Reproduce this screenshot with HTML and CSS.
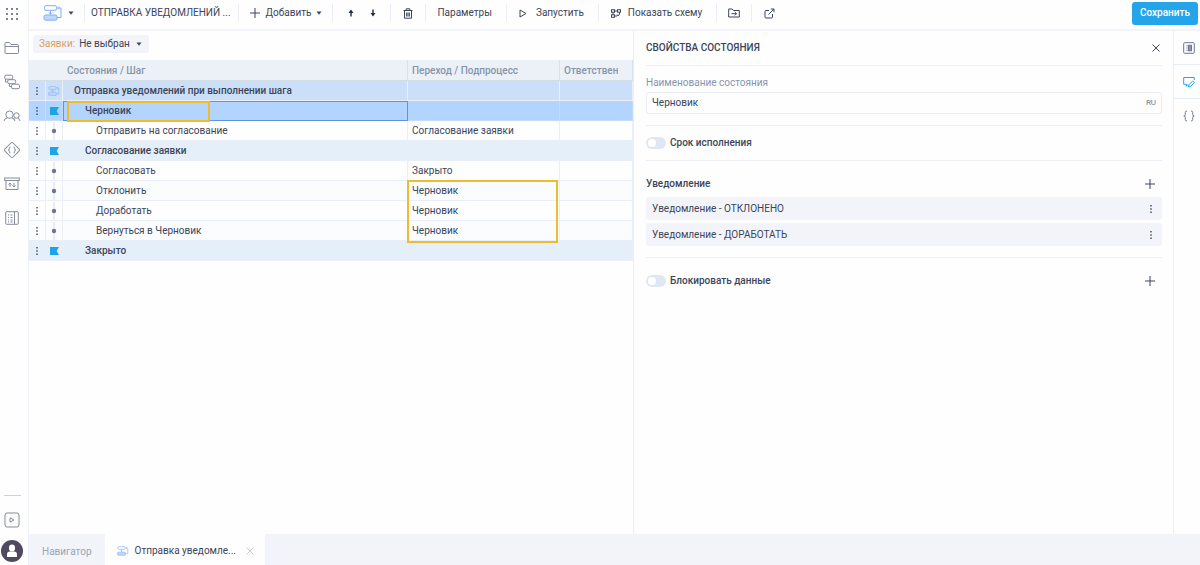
FILE: index.html
```html
<!DOCTYPE html>
<html lang="ru">
<head>
    <meta charset="UTF-8">
    <meta name="viewport" content="width=device-width, initial-scale=1.0">
    <title>Отправка уведомлений при выполнении шага</title>
    <link rel="stylesheet" href="styles.css">
</head>
<body>
    <!-- Набор иконок -->
    <svg class="sprite" aria-hidden="true">
        <symbol id="i-plus" viewBox="0 0 12 12"><path d="M6 1v10M1 6h10"/></symbol>
        <symbol id="i-close" viewBox="0 0 10 10"><path d="M1.5 1.5l7 7M8.500 1.500l-7 7"/></symbol>
        <symbol id="i-caret" viewBox="0 0 6 4"><path d="M.5.5h5L3 3.700z" fill="currentColor" stroke="none"/></symbol>
        <symbol id="i-dots" viewBox="0 0 4 10"><path d="M1.300 1h1.400v1.400H1.300zM1.300 4.300h1.400v1.400H1.300zM1.300 7.600h1.400V9H1.300z" fill="currentColor" stroke="none"/></symbol>
        <symbol id="i-process" viewBox="0 0 20 16"><rect x="1.500" y=".7" width="12" height="4.600" rx="1.500"/><path d="M14.500 3H18v9.500h-4M7.500 5.500V9M5.800 7.500L7.500 9.200l1.700-1.700M16 1.500L14.500 3 16 4.500"/><rect x="1" y="10" width="13" height="5.200" rx="1.500" fill="#bdd7fd"/></symbol>
        <symbol id="i-flag" viewBox="0 0 9 8"><path d="M0 0h9L6.700 4 9 8H0z" fill="#1fa3e8" stroke="none"/></symbol>
        <symbol id="i-step" viewBox="0 0 8 18"><path d="M4 0v18" stroke="#d5dceb"/><circle cx="4" cy="9" r="2.200" fill="#6d7890" stroke="none"/></symbol>
    </svg>

    <div class="app">
        <!-- Левое меню -->
        <nav class="sidebar" aria-label="Главное меню">
            <button class="nav-button nav-apps" aria-label="Меню"><svg width="12" height="12" viewBox="0 0 12 12"><path d="M0 0h2v2H0zM5 0h2v2H5zM10 0h2v2h-2zM0 5h2v2H0zM5 5h2v2H5zM10 5h2v2h-2zM0 10h2v2H0zM5 10h2v2H5zM10 10h2v2h-2z" fill="#7b8291" stroke="none"/></svg></button>
            <button class="nav-button" aria-label="Файлы"><svg width="16" height="14" viewBox="0 0 16 14"><path d="M1 11.500V2.500Q1 1.500 2 1.500h3.500L7 3.500h6.500q1 0 1 1v7q0 1-1 1H2q-1 0-1-1zM1 5.500h13.500"/></svg></button>
            <button class="nav-button" aria-label="Процессы"><svg width="16" height="16" viewBox="0 0 16 16"><rect x=".7" y="1.200" width="8" height="4" rx="1.500"/><rect x="3.700" y="5.700" width="8" height="4" rx="1.500" fill="#fff"/><rect x="7.500" y="10.200" width="8" height="4.500" rx="1.500" fill="#fff"/><path d="M1.500 5v3h2M5.500 10v2.500h2"/></svg></button>
            <button class="nav-button" aria-label="Пользователи"><svg width="18" height="12" viewBox="0 0 18 12"><circle cx="6.500" cy="4.700" r="3.700"/><path d="M1 11q.6-2.800 3.200-3M12 11q-.6-2.800-3.200-3"/><circle cx="13.500" cy="5.500" r="2.700"/><path d="M14.800 8.300q1.900.5 2.200 2.700M12.200 8.200q-1 .5-1 1.300"/></svg></button>
            <button class="nav-button" aria-label="Скрипты"><svg width="18" height="18" viewBox="0 0 18 18"><rect x="3.300" y="3.300" width="11.400" height="11.400" rx="1.500" transform="rotate(45 9 9)"/><path d="M7.500 6q-1.400 0-1.200 1.500T5.300 9q1.200 0 1 1.500T7.500 12M10.500 6q1.400 0 1.200 1.500T12.700 9q-1.200 0-1 1.500T10.500 12"/></svg></button>
            <button class="nav-button" aria-label="Обмен"><svg width="16" height="14" viewBox="0 0 16 14"><rect x=".7" y="1" width="14.600" height="2.500"/><path d="M2 3.500v9h12v-9M6 10V6M4.500 7.500L6 6l1.500 1.500M10 6v4M8.500 8.500L10 10l1.500-1.500"/></svg></button>
            <button class="nav-button" aria-label="Журнал"><svg width="14" height="14" viewBox="0 0 14 14"><rect x=".7" y=".7" width="12.600" height="12.600" rx="1"/><path d="M9.500 1v12M3 4h1M5.500 4h2M3 6.500h1M5.500 6.500h2M3 9h1M5.500 9h2M3 11h1M5.500 11h2"/></svg></button>
            <div class="sidebar-bottom">
                <button class="nav-button" aria-label="Видео"><svg width="16" height="16" viewBox="0 0 16 16"><rect x="1" y="1" width="14" height="14" rx="2"/><path d="M6 5.800l4 2.200-4 2.200z"/></svg></button>
                <button class="nav-button" aria-label="Профиль"><svg width="22" height="22" viewBox="0 0 22 22"><circle cx="11" cy="11" r="11" fill="#514960" stroke="none"/><rect x="8" y="4.500" width="6" height="7" rx="3" fill="#fff" stroke="none"/><path d="M6 17v-2.500q0-3 3-3h4q3 0 3 3V17z" fill="#fff" stroke="none"/></svg></button>
            </div>
        </nav>

        <div class="workspace">
            <!-- Панель инструментов -->
            <header class="toolbar">
                <div class="tool-group group-logo">
                    <button class="tool" aria-label="Тип объекта"><svg class="blue" width="20" height="16"><use href="#i-process"/></svg><svg width="6" height="4"><use href="#i-caret"/></svg></button>
                </div>
                <div class="tool-group group-title">ОТПРАВКА УВЕДОМЛЕНИЙ ...</div>
                <div class="tool-group group-add">
                    <button class="tool"><svg width="12" height="12"><use href="#i-plus"/></svg><span>Добавить</span><svg width="6" height="4"><use href="#i-caret"/></svg></button>
                </div>
                <div class="tool-group group-arrows">
                    <button class="tool" aria-label="Вверх"><svg width="8" height="8" viewBox="0 0 8 8"><path d="M4 .5l2.500 3.500H4.700v3.500H3.300V4H1.500z" fill="#1f2c40" stroke="none"/></svg></button>
                    <button class="tool" aria-label="Вниз"><svg width="8" height="8" viewBox="0 0 8 8"><path d="M4 7.500L1.500 4h1.800V.5h1.400V4h1.800z" fill="#1f2c40" stroke="none"/></svg></button>
                </div>
                <div class="tool-group group-icon">
                    <button class="tool" aria-label="Удалить"><svg width="10" height="11" viewBox="0 0 10 11"><path d="M.5 2.500h9M3.200 2.500V.8h3.600v1.700M1.500 2.500v7.700h7V2.500M3.700 4.500v4M5 4.500v4M6.300 4.500v4"/></svg></button>
                </div>
                <div class="tool-group group-params"><button class="tool">Параметры</button></div>
                <div class="tool-group group-run">
                    <button class="tool"><svg width="8" height="9" viewBox="0 0 8 9"><path d="M1 1l6 3.500L1 8z"/></svg><span>Запустить</span></button>
                </div>
                <div class="tool-group group-schema">
                    <button class="tool"><svg width="10" height="9" viewBox="0 0 10 9"><rect x=".5" y=".7" width="3" height="2.500"/><rect x="6.500" y=".7" width="3" height="2.500"/><rect x=".5" y="5.800" width="3" height="2.500"/><path d="M3.500 2h3M2 3.200v2.600M3.500 7H6M8.500 3.200V5L7 7l-1-1.500"/></svg><span>Показать схему</span></button>
                </div>
                <div class="tool-group group-icon">
                    <button class="tool" aria-label="Переместить"><svg width="12" height="10" viewBox="0 0 12 10"><path d="M.7 9V1h3.500l1.300 1.500h5.800V9zM3.500 5.700h5M6.800 4l1.700 1.700-1.700 1.700"/></svg></button>
                </div>
                <div class="tool-group group-icon">
                    <button class="tool" aria-label="Открыть отдельно"><svg width="11" height="11" viewBox="0 0 11 11"><path d="M5 2.500H2q-1 0-1 1V9q0 1 1 1h5.500q1 0 1-1V6M4.500 6.500L10 1M6.800 1H10v3.200"/></svg></button>
                </div>
                <button class="save-button">Сохранить</button>
            </header>

            <div class="content">
                <!-- Таблица состояний -->
                <main class="states">
                    <div class="filter">
                        <label for="request">Заявки:</label>
                        <select id="request"><option>Не выбран</option></select>
                        <svg width="6" height="4"><use href="#i-caret"/></svg>
                    </div>
                    <table class="states-table">
                        <colgroup><col class="col-menu"><col class="col-type"><col><col class="col-target"><col class="col-owner"></colgroup>
                        <thead>
                            <tr><th colspan="3" class="th-name">Состояния / Шаг</th><th>Переход / Подпроцесс</th><th><div class="clip">Ответственный</div></th></tr>
                        </thead>
                        <tbody>
                            <tr class="row-root">
                                <td><svg width="4" height="10"><use href="#i-dots"/></svg></td>
                                <td><svg class="blue" width="12" height="10"><use href="#i-process"/></svg></td>
                                <td class="level-0">Отправка уведомлений при выполнении шага</td><td></td><td></td>
                            </tr>
                            <tr class="row-selected">
                                <td><svg width="4" height="10"><use href="#i-dots"/></svg></td>
                                <td><svg width="9" height="8"><use href="#i-flag"/></svg></td>
                                <td class="level-1 cell-focus">Черновик<span class="mark mark-state"></span></td><td></td><td></td>
                            </tr>
                            <tr>
                                <td><svg width="4" height="10"><use href="#i-dots"/></svg></td>
                                <td><svg width="8" height="18"><use href="#i-step"/></svg></td>
                                <td class="level-2">Отправить на согласование</td><td>Согласование заявки</td><td></td>
                            </tr>
                            <tr class="row-state">
                                <td><svg width="4" height="10"><use href="#i-dots"/></svg></td>
                                <td><svg width="9" height="8"><use href="#i-flag"/></svg></td>
                                <td class="level-1">Согласование заявки</td><td></td><td></td>
                            </tr>
                            <tr>
                                <td><svg width="4" height="10"><use href="#i-dots"/></svg></td>
                                <td><svg width="8" height="18"><use href="#i-step"/></svg></td>
                                <td class="level-2">Согласовать</td><td>Закрыто</td><td></td>
                            </tr>
                            <tr class="row-alt">
                                <td><svg width="4" height="10"><use href="#i-dots"/></svg></td>
                                <td><svg width="8" height="18"><use href="#i-step"/></svg></td>
                                <td class="level-2">Отклонить</td><td class="cell-mark">Черновик<span class="mark mark-target"></span></td><td></td>
                            </tr>
                            <tr>
                                <td><svg width="4" height="10"><use href="#i-dots"/></svg></td>
                                <td><svg width="8" height="18"><use href="#i-step"/></svg></td>
                                <td class="level-2">Доработать</td><td>Черновик</td><td></td>
                            </tr>
                            <tr class="row-alt">
                                <td><svg width="4" height="10"><use href="#i-dots"/></svg></td>
                                <td><svg width="8" height="18"><use href="#i-step"/></svg></td>
                                <td class="level-2">Вернуться в Черновик</td><td>Черновик</td><td></td>
                            </tr>
                            <tr class="row-state">
                                <td><svg width="4" height="10"><use href="#i-dots"/></svg></td>
                                <td><svg width="9" height="8"><use href="#i-flag"/></svg></td>
                                <td class="level-1">Закрыто</td><td></td><td></td>
                            </tr>
                        </tbody>
                    </table>
                </main>

                <!-- Свойства состояния -->
                <aside class="properties">
                    <div class="section section-title">
                        <h2>СВОЙСТВА СОСТОЯНИЯ</h2>
                        <button class="icon-button" aria-label="Закрыть"><svg width="10" height="10"><use href="#i-close"/></svg></button>
                    </div>
                    <div class="section section-name">
                        <label for="state-name">Наименование состояния</label>
                        <div class="field"><input type="text" id="state-name" value="Черновик"><span class="lang">RU</span></div>
                    </div>
                    <div class="section section-term">
                        <label class="switch"><input type="checkbox"><span>Срок исполнения</span></label>
                    </div>
                    <div class="section section-notice">
                        <div class="section-head">
                            <h3>Уведомление</h3>
                            <button class="icon-button" aria-label="Добавить уведомление"><svg width="12" height="12"><use href="#i-plus"/></svg></button>
                        </div>
                        <div class="notice">Уведомление - ОТКЛОНЕНО<button class="icon-button" aria-label="Действия"><svg width="4" height="10"><use href="#i-dots"/></svg></button></div>
                        <div class="notice">Уведомление - ДОРАБОТАТЬ<button class="icon-button" aria-label="Действия"><svg width="4" height="10"><use href="#i-dots"/></svg></button></div>
                    </div>
                    <div class="section section-lock">
                        <label class="switch"><input type="checkbox"><span>Блокировать данные</span></label>
                        <button class="icon-button" aria-label="Добавить блокировку"><svg width="12" height="12"><use href="#i-plus"/></svg></button>
                    </div>
                </aside>

                <!-- Правая панель -->
                <nav class="rail" aria-label="Панели">
                    <button aria-label="Форма"><svg width="12" height="12" viewBox="0 0 12 12"><rect x=".7" y=".7" width="10.600" height="10.600" rx="1"/><path d="M3.500 3.500h1M3.500 5.200h1M3.500 6.900h1M3.500 8.600h1" /><rect x="5.500" y="3.300" width="3" height="5.500" fill="#8d95a5"/></svg></button>
                    <button class="active" aria-label="Свойства"><svg width="12" height="12" viewBox="0 0 12 12"><path d="M11.300 4V1.500H.7v6.800h2.800v2L5 8.300M5.500 11l.4-2.200L9.800 5l1.600 1.600-3.900 3.900z"/></svg></button>
                    <button aria-label="Переменные"><svg width="12" height="12" viewBox="0 0 12 12"><path d="M4 1Q2.300 1 2.300 2.500v2Q2.300 6 .8 6q1.500 0 1.500 1.500v2Q2.300 11 4 11M8 1q1.700 0 1.700 1.500v2Q9.700 6 11.200 6 9.700 6 9.700 7.500v2Q9.700 11 8 11"/></svg></button>
                </nav>
            </div>

            <!-- Вкладки -->
            <footer class="tabs">
                <button class="tab">Навигатор</button>
                <div class="tab tab-active">
                    <svg class="blue" width="12" height="10"><use href="#i-process"/></svg>
                    <a href="#">Отправка уведомле...</a>
                    <button class="icon-button" aria-label="Закрыть вкладку"><svg width="10" height="10"><use href="#i-close"/></svg></button>
                </div>
            </footer>
        </div>
    </div>
</body>
</html>
```
FILE: styles.css
```css
* {
    box-sizing: border-box;
}
body {
    margin: 0;
    font-family: Roboto, Arial, sans-serif;
    font-size: 10px;
    line-height: 14px;
    color: #3c4558;
    background-color: #fefefe;
}
button, input, select {
    font: inherit;
    color: inherit;
    padding: 0;
    border: none;
    background: none;
}
button {
    cursor: pointer;
}
svg {
    display: block;
    flex: none;
    fill: none;
    stroke: currentColor;
}
h2, h3 {
    margin: 0;
    font-size: 10px;
    font-weight: 500;
}
.sprite {
    position: absolute;
    width: 0;
    height: 0;
}
.blue {
    color: #7fb0f5;
}
.app {
    display: flex;
    min-height: 100vh;
}

/* Левое меню */
.sidebar {
    width: 29px;
    padding-right: 4px;
    display: flex;
    flex-direction: column;
    border-right: 1px solid #eef0f7;
    color: #858b99;
}
.nav-button {
    height: 34px;
    display: flex;
    align-items: center;
    justify-content: center;
}
.nav-apps {
    height: 27px;
    margin-bottom: 4px;
}
.sidebar-bottom {
    margin-top: auto;
    display: flex;
    flex-direction: column;
}
.sidebar-bottom::before {
    content: "";
    height: 1px;
    margin: 0 3px 6px 4px;
    background-color: #c9d3e0;
}
.sidebar-bottom .nav-button {
    height: 35px;
}
.sidebar-bottom .nav-button:last-child {
    height: 28px;
}

.workspace {
    flex: 1;
    min-width: 0;
    display: flex;
    flex-direction: column;
}

/* Панель инструментов */
.toolbar {
    height: 31px;
    padding: 0 2px 3px 0;
    display: flex;
    align-items: center;
    border-bottom: 2px solid #f3f4fa;
}
.tool-group {
    height: 18px;
    display: flex;
    align-items: center;
    justify-content: center;
    border-right: 1px solid #eceef7;
    white-space: nowrap;
}
.tool-group:nth-last-child(2) {
    border-right: none;
}
.tool {
    display: flex;
    align-items: center;
    gap: 5px;
    color: #3c4558;
}
.group-logo {
    padding: 0 10px 0 14px;
}
.group-title {
    padding: 0 7px 0 6px;
}
.group-add {
    padding: 0 10px;
}
.group-arrows {
    width: 58px;
    gap: 14px;
}
.group-icon {
    width: 35px;
}
.group-params {
    padding: 0 14px 0 11px;
}
.group-run {
    padding: 0 14px 0 12px;
}
.group-run .tool {
    gap: 9px;
}
.group-schema {
    padding: 0 14px 0 12px;
}
.group-schema .tool {
    gap: 7px;
}
.save-button {
    height: 23px;
    margin-left: auto;
    padding: 0 8px;
    border-radius: 3px;
    background-color: #24a5ea;
    color: white;
    font-weight: 500;
}

.content {
    flex: 1;
    display: grid;
    grid-template-columns: 605fr 539fr 27px;
}

/* Таблица состояний */
.states {
    min-width: 0;
    border-right: 1px solid #edeef5;
}
.filter {
    width: max-content;
    height: 18px;
    margin: 4px 0 7px 4px;
    padding: 0 7px 0 6px;
    display: flex;
    align-items: center;
    gap: 4px;
    border-radius: 3px;
    background-color: #f3f4fa;
}
.filter label {
    color: #d9a066;
}
.filter select {
    appearance: none;
    margin-right: 2px;
}
.states-table {
    width: 100%;
    table-layout: fixed;
    border-collapse: separate;
    border-spacing: 0;
}
.col-menu {
    width: 17px;
}
.col-type {
    width: 17px;
}
.col-target {
    width: 152px;
}
.col-owner {
    width: 73px;
}
.states-table th {
    height: 21px;
    padding: 1px 14px 0 4px;
    text-align: left;
    font-weight: 500;
    color: #8795ab;
    background-color: #ecf0f7;
    border-right: 1px solid #d9e0ea;
    border-bottom: 1px solid #d3dde6;
    white-space: nowrap;
}
.states-table .th-name {
    padding-left: 38px;
}
.clip {
    overflow: hidden;
}
.states-table td {
    height: 20px;
    padding: 0 0 0 4px;
    border-right: 1px solid #e9eef7;
    border-bottom: 1px solid #e9eef7;
    white-space: nowrap;
}
.states-table td svg {
    margin: 0 auto;
}
.states-table td:nth-child(-n+2) {
    padding: 0;
}
.states-table .level-0 {
    padding-left: 11px;
}
.states-table .level-1 {
    padding-left: 22px;
}
.states-table .level-2 {
    padding-left: 33px;
}
.row-root, .row-selected, .row-state {
    font-weight: 500;
}
.row-root td {
    background-color: #cbdff9;
}
.row-selected td {
    background-color: #b3d4ff;
    border-color: #c3dcff;
}
.row-state td {
    background-color: #e5eff9;
}
.row-alt td {
    background-color: #fbfcfe;
}
.cell-focus, .cell-mark {
    position: relative;
}
.states-table .cell-focus {
    padding-left: 21px;
    border: 1px solid #5b95e8;
}
/* Выделение ячеек рамкой */
.mark {
    position: absolute;
    border: 2px solid #eebd2f;
    pointer-events: none;
}
.mark-state {
    top: -1px;
    left: 3px;
    width: 143px;
    height: 21px;
}
.mark-target {
    top: -1px;
    left: -1px;
    width: 151px;
    height: 63px;
    z-index: 1;
}

/* Свойства состояния */
.properties {
    padding: 0 11px 0 12px;
}
.section {
    border-bottom: 1px solid #edeff6;
}
.section-title, .section-head, .section-lock {
    display: flex;
    align-items: center;
    justify-content: space-between;
}
.section-title {
    height: 35px;
}
.icon-button {
    display: flex;
    align-items: center;
    justify-content: center;
    width: 12px;
    height: 14px;
}
.section-name {
    padding: 10px 0 11px;
}
.section-name label {
    display: block;
    margin-bottom: 2px;
    color: #8795ab;
}
.field {
    height: 22px;
    padding: 0 5px;
    display: flex;
    align-items: center;
    border: 1px solid #e9ecf5;
    border-radius: 3px;
}
.field input {
    flex: 1;
    min-width: 0;
    outline: none;
}
.lang {
    font-size: 8px;
    color: #70798a;
}
.section-term {
    height: 35px;
    display: flex;
    align-items: center;
}
.switch {
    display: flex;
    align-items: center;
    gap: 4px;
    font-weight: 500;
}
.switch input {
    appearance: none;
    width: 20px;
    height: 12px;
    margin: 0;
    padding: 2px;
    border-radius: 6px;
    background-color: #e1e6f3;
}
.switch input::before {
    content: "";
    display: block;
    width: 8px;
    height: 8px;
    border-radius: 50%;
    background-color: white;
}
.switch input:checked::before {
    margin-left: auto;
}
.section-notice {
    padding: 16px 0 11px;
}
.section-head {
    height: 14px;
    margin-bottom: 6px;
}
.section-head, .section-lock {
    padding-right: 6px;
}
.notice {
    height: 23px;
    padding: 0 5px 0 6px;
    display: flex;
    align-items: center;
    justify-content: space-between;
    border-radius: 3px;
    background-color: #f3f4fa;
}
.notice + .notice {
    margin-top: 3px;
}
.section-lock {
    height: 46px;
    border-bottom: none;
}

/* Правая панель */
.rail {
    display: flex;
    flex-direction: column;
    border-left: 1px solid #edeef5;
    color: #70798a;
}
.rail button {
    height: 34px;
    padding-left: 4px;
    display: flex;
    align-items: center;
    justify-content: center;
    border-bottom: 1px solid #e7edf8;
}
.rail button:last-child {
    border-bottom: none;
}
.rail .active {
    color: #24a5ea;
}

/* Вкладки */
.tabs {
    height: 31px;
    display: flex;
    background-color: #f2f4fa;
}
.tab {
    padding: 4px 13px 0;
    color: #9ba5b4;
}
.tab-active {
    padding: 2px 9px 0 12px;
    display: flex;
    align-items: center;
    background-color: #fefefe;
}
.tab-active a {
    margin: 0 8px 0 6px;
    color: #3c4558;
    text-decoration: none;
}
.tab-active .icon-button {
    color: #c8ced8;
}
```
